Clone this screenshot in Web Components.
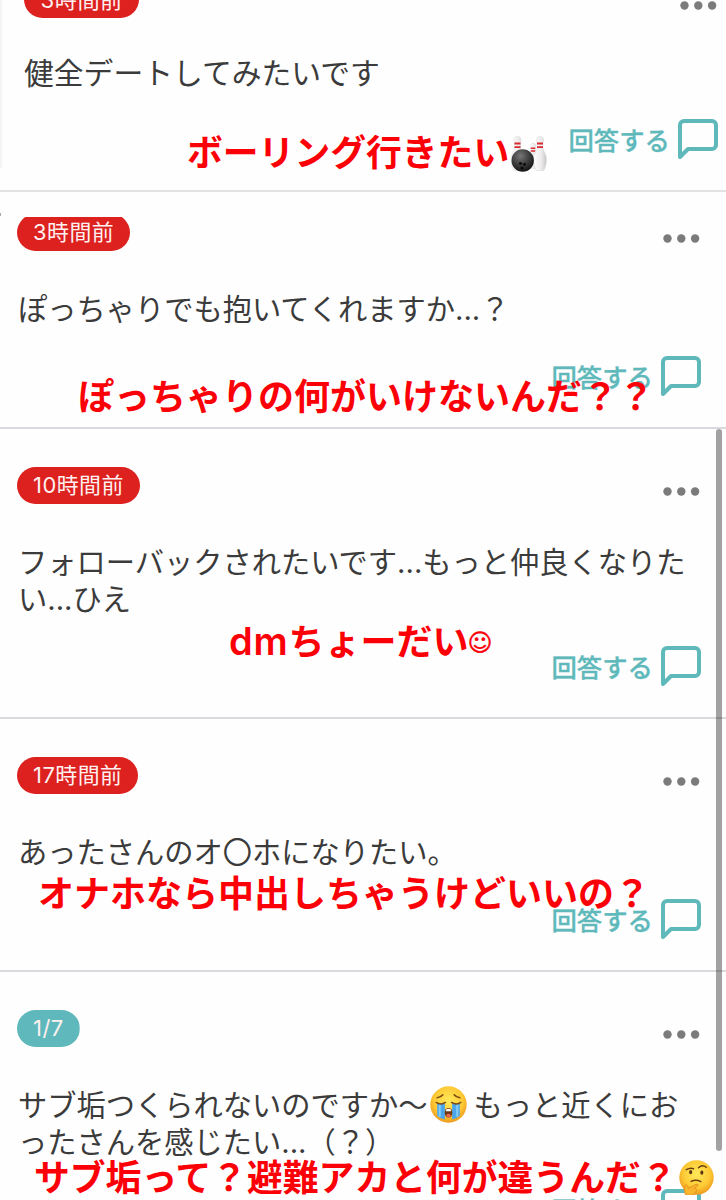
<!DOCTYPE html>
<html lang="ja">
<head>
<meta charset="utf-8">
<title>質問箱</title>
<style>
  html, body { margin: 0; padding: 0; }
  body {
    background: #fefefe;
    color: #3b3b3b;
    font-family: "Inter", "Noto Sans CJK JP", sans-serif;
    overflow: hidden;
  }
  .latin { font-size: 38px; font-weight: 600; letter-spacing: .8px; margin-left: 1px; line-height: 1; }
  .smile { font: 400 24px/1 "DejaVu Sans"; vertical-align: 4px; margin-left: -1px; -webkit-text-stroke: .4px currentColor; }
</style>
</head>
<body>
<question-list>
  <question-card class="first" time="3時間前">健全デートしてみたいです</question-card>
  <question-card class="second" time="3時間前">ぽっちゃりでも抱いてくれますか...？</question-card>
  <question-card time="10時間前">フォローバックされたいです...もっと仲良くなりた<br>い...ひえ</question-card>
  <question-card time="17時間前">あったさんのオ〇ホになりたい。</question-card>
  <question-card time="1/7" color="#5fb9bc">サブ垢つくられないのですか〜<emoji-icon name="cry" style="--size:37px;--lift:-4px;margin:-6px 7px -6px 2px"></emoji-icon>もっと近くにお<br>ったさんを感じたい...（？）</question-card>

  <red-note slot="notes" x="187" y="153" size="35.8">ボーリング行きたい<emoji-icon name="bowling" style="--size:36px;--lift:-2px;margin-left:2px"></emoji-icon></red-note>
  <red-note slot="notes" x="78" y="397" size="36">ぽっちゃりの何がいけないんだ？？</red-note>
  <red-note slot="notes" x="228" y="642" size="36"><span class="latin">dm</span>ちょーだい<span class="smile">☺</span></red-note>
  <red-note slot="notes" x="38" y="894" size="36">オナホなら中出しちゃうけどいいの？</red-note>
  <red-note slot="notes" x="34" y="1178" size="35.8">サブ垢って？避難アカと何が違うんだ？<emoji-icon name="think" style="--size:35px;--lift:-4px;margin-left:2px"></emoji-icon></red-note>
</question-list>

<script>
const listTemplate = document.createElement("template");
listTemplate.innerHTML = `
  <style>
    :host { display: block; position: relative; width: 726px; height: 1200px; overflow: hidden; }
    .cards { display: flex; flex-direction: column; }
    .scrollbar { position: absolute; left: 716px; top: 429px; width: 6px; height: 722px; border-radius: 3px; background: rgba(0,0,0,.36); }
    .edge { position: absolute; left: 0; top: 0; width: 2px; height: 168px; background: #f5f5f5; }
    .speck { position: absolute; left: 0; top: 213px; width: 1px; height: 3px; background: #aaa; }
  </style>
  <div class="cards"><slot></slot></div>
  <div class="edge"></div>
  <div class="speck"></div>
  <div class="scrollbar"></div>
  <slot name="notes"></slot>
`;

class QuestionList extends HTMLElement {
  constructor() {
    super();
    this.attachShadow({ mode: "open" }).appendChild(listTemplate.content.cloneNode(true));
  }
}

const cardTemplate = document.createElement("template");
cardTemplate.innerHTML = `
  <style>
    :host {
      display: flex;
      flex-direction: column;
      box-sizing: border-box;
      flex: none;
      padding: 38px 25px 31px 17px;
      border-bottom: 2px solid #d9dadd;
      overflow: hidden;
    }
    :host(.first) { height: 192px; padding: 0 8px 31px 24px; border-color: #e2e2e2; --pull: -19px; --text-top: 37px; --foot-top: 27px; }
    :host(.second) { height: 237px; padding-top: 25px; --pull: -3px; --cut: 3px; }
    .head { display: flex; justify-content: space-between; align-items: center; margin-top: var(--pull, 0); height: 37px; }
    .time {
      display: flex;
      align-items: center;
      height: 37px;
      padding: 0 16px;
      border-radius: 19px;
      color: #fff0f0;
      font-size: 21.9px;
      line-height: 37px;
      letter-spacing: .5px;
      clip-path: inset(var(--cut, 0) 0 0 0);
    }
    :host(.first) .time { font-size: 22.2px; padding: 0 16.5px; }
    .dots { display: block; width: 37px; height: 9px; margin: 12px 1px 0 0; }
    .text { margin: var(--text-top, 40px) 0 0 1px; font-size: 29.25px; line-height: 37px; white-space: nowrap; }
    :host(.first) .text { font-size: 29.8px; margin-left: 0; }
    .foot { display: flex; justify-content: flex-end; align-items: center; margin-top: var(--foot-top, 28px); }
  </style>
  <div class="head">
    <div class="time"></div>
    <svg class="dots" viewBox="0 0 37 9" fill="#7b7b7b">
      <circle cx="4.5" cy="4.5" r="4.2"/><circle cx="18.3" cy="4.5" r="4.2"/><circle cx="32.1" cy="4.5" r="4.2"/>
    </svg>
  </div>
  <div class="text"><slot></slot></div>
  <div class="foot"><reply-button></reply-button></div>
`;

class QuestionCard extends HTMLElement {
  constructor() {
    super();
    this.attachShadow({ mode: "open" }).appendChild(cardTemplate.content.cloneNode(true));
  }

  connectedCallback() {
    const time = this.shadowRoot.querySelector(".time");
    time.textContent = this.getAttribute("time");
    time.style.backgroundColor = this.getAttribute("color") || "#dc211f";
  }
}

class ReplyButton extends HTMLElement {
  constructor() {
    super();
    this.attachShadow({ mode: "open" }).innerHTML = `
      <style>
        :host { display: flex; align-items: center; gap: 8px; height: 40px; color: #5fb9bb; }
        span { padding-top: 3px; font-size: 25.4px; font-weight: 500; line-height: 40px; -webkit-text-stroke: .3px currentColor; }
        svg { display: block; width: 40px; height: 40px; }
      </style>
      <span>回答する</span>
      <svg viewBox="2 2 20 20" fill="none" stroke="currentColor" stroke-width="2" stroke-linecap="round" stroke-linejoin="round">
        <path d="M21 15a2 2 0 0 1-2 2H7l-4 4V5a2 2 0 0 1 2-2h14a2 2 0 0 1 2 2z"/>
      </svg>
    `;
  }
}

class RedNote extends HTMLElement {
  constructor() {
    super();
    this.attachShadow({ mode: "open" }).innerHTML = `
      <style>
        :host { display: block; position: absolute; height: 40px; color: #fb0007; font-weight: 700; line-height: 40px; white-space: nowrap; }
      </style>
      <slot></slot>
    `;
  }

  connectedCallback() {
    this.style.left = `${this.getAttribute("x")}px`;
    this.style.top = `${this.getAttribute("y") - 20}px`;
    this.style.fontSize = `${this.getAttribute("size")}px`;
  }
}

const face = `
  <defs><radialGradient id="g" cx=".5" cy=".4" r=".6">
    <stop offset="0" stop-color="#ffe95a"/><stop offset=".65" stop-color="#fdca35"/><stop offset="1" stop-color="#ee9a1d"/>
  </radialGradient></defs>
  <circle cx="18" cy="18" r="17.7" fill="url(#g)"/>`;

const emoji = {
  cry: `${face}
    <path d="M7 17h7.5v15.5q-4.5-.5-7.5-3.5zM21.5 17H29v12q-3 3-7.5 3.5z" fill="#4aa5ea"/>
    <path d="M9.5 18v12M26.5 18v12" stroke="#82cdf8" stroke-width="2"/>
    <path d="M6 16q4.5 3 9 0M21 16q4.5 3 9 0M7 11.5q3.5-.5 5.500-3M29 11.5q-3.5-.5-5.500-3" fill="none" stroke="#7b4a12" stroke-width="1.5" stroke-linecap="round"/>
    <ellipse cx="18" cy="26" rx="3.7" ry="4.7" fill="#6d3710"/>
    <path d="M15.5 23.2q2.5-2 5 0v1.3h-5z" fill="#fff"/>
    <ellipse cx="18" cy="28.7" rx="2.3" ry="1.6" fill="#e9665a"/>`,
  think: `${face}
    <ellipse cx="12" cy="12.5" rx="1.6" ry="2.2" fill="#5b3514"/><ellipse cx="23.5" cy="13" rx="1.6" ry="2.2" fill="#5b3514"/>
    <path d="M7.5 10q4-2.500 7.500-1M20 8q4-4 8-.5M12.5 22q5-2.5 10 .2" fill="none" stroke="#6b3d11" stroke-width="1.5" stroke-linecap="round"/>
    <path d="M6.5 35.5Q4.5 30 6 26.5q1.2-2 2.7 0l1 2.5 7.8-4q2.5-.6 2.2 1.2l-4 3q3.300.5 1.800 3.300-2 5.500-11 3z" fill="#f9b52b" stroke="#df881c" stroke-width=".8"/>`,
  bowling: `
    <defs>
      <radialGradient id="b" cx=".4" cy=".3" r=".7"><stop offset="0" stop-color="#777"/><stop offset=".5" stop-color="#444"/><stop offset="1" stop-color="#171717"/></radialGradient>
      <linearGradient id="p"><stop offset="0" stop-color="#fff"/><stop offset=".6" stop-color="#eceaea"/><stop offset="1" stop-color="#c9c6c6"/></linearGradient>
      <g id="pin">
        <path d="M0 0c3 0 4 2.2 3.3 5L2.800 11c.5 4 3.700 6.500 3.700 12 0 5-1.500 8-2.500 11h-8c-1-3-2.500-6-2.500-11 0-5.500 3.200-8 3.700-12l-.5-6C-4 2.200-3 0 0 0z" fill="url(#p)" stroke="#d5d2d2" stroke-width=".4"/>
        <path d="M-3 7h6M-3 10.6h6" stroke="#d82b31" stroke-width="1.9"/>
      </g>
    </defs>
    <use href="#pin" transform="translate(6.5 .5)"/>
    <use href="#pin" transform="translate(22 7) scale(.75)"/>
    <use href="#pin" transform="translate(29 .5)"/>
    <circle cx="11.7" cy="24.5" r="11.2" fill="url(#b)"/>
    <ellipse cx="9.5" cy="27.5" rx="1.6" ry="1.3" fill="#080808"/><ellipse cx="13.5" cy="28.3" rx="1.3" ry="1.6" fill="#080808"/><circle cx="11" cy="32" r="1.5" fill="#080808"/>`
};

class EmojiIcon extends HTMLElement {
  constructor() {
    super();
    this.attachShadow({ mode: "open" });
  }

  connectedCallback() {
    this.shadowRoot.innerHTML = `
      <style>
        :host { display: inline-block; width: var(--size); height: var(--size); vertical-align: middle; line-height: 0; }
        svg { display: block; width: 100%; height: 100%; transform: translateY(var(--lift, 0)); }
      </style>
      <svg viewBox="0 0 36 36">${emoji[this.getAttribute("name")]}</svg>
    `;
  }
}

customElements.define("emoji-icon", EmojiIcon);
customElements.define("reply-button", ReplyButton);
customElements.define("red-note", RedNote);
customElements.define("question-card", QuestionCard);
customElements.define("question-list", QuestionList);
</script>
</body>
</html>
